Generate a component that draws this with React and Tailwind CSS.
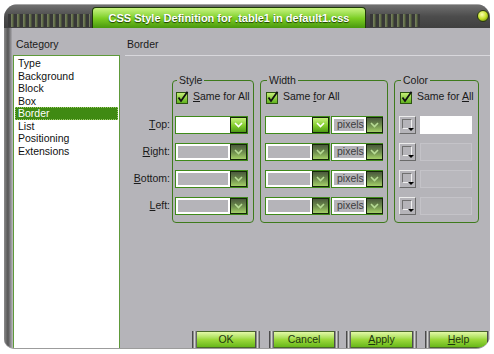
import React from "react";

const categories = ["Type", "Background", "Block", "Box", "Border", "List", "Positioning", "Extensions"];

function Chevron({ color }) {
  return (
    <svg width="9" height="6" viewBox="0 0 9 6">
      <path d="M1 1 L4.5 4.5 L8 1" stroke={color} strokeWidth="1.6" fill="none" />
    </svg>
  );
}

function DropBtn({ on }) {
  return (
    <div
      className={`w-[17px] h-full shrink-0 border border-[#15250a] flex items-center justify-center ${
        on
          ? "bg-linear-to-b from-[#c6f07c] via-[#88d030] to-[#4e9e14]"
          : "bg-linear-to-b from-[#4b5a3c] via-[#6d8c4d] to-[#a4d068]"
      }`}
    >
      <Chevron color={on ? "#ffffff" : "#b8dc96"} />
    </div>
  );
}

function Drop({ on, btnOn, w, text }) {
  return (
    <div className={`${w} h-[18px] flex border border-[#3f8a1a]`}>
      <div
        className={`flex-1 flex items-center pl-[3px] text-[#3c3c3c] ${
          on ? "bg-white" : "bg-[#b5b4b9] border-2 border-white"
        }`}
      >
        {text}
      </div>
      <DropBtn on={btnOn} />
    </div>
  );
}

function Swatch() {
  return (
    <div className="relative w-[17px] h-[18px] shrink-0 bg-[#b5b4b9] border border-t-[#ececec] border-l-[#ececec] border-r-[#6a6a6a] border-b-[#6a6a6a]">
      <div className="absolute left-[2px] top-[2px] w-[10px] h-[10px] border border-t-[#707070] border-l-[#707070] border-r-[#f0f0f0] border-b-[#f0f0f0]" />
      <div className="absolute right-[1px] bottom-[2px] w-0 h-0 border-l-[3px] border-r-[3px] border-t-[3px] border-l-transparent border-r-transparent border-t-black" />
    </div>
  );
}

function Check() {
  return (
    <svg width="13" height="13" viewBox="0 0 13 13" className="shrink-0">
      <defs>
        <linearGradient id="cb" x1="0" y1="0" x2="0" y2="1">
          <stop offset="0" stopColor="#c8f07a" />
          <stop offset="1" stopColor="#5cb01a" />
        </linearGradient>
      </defs>
      <rect x="0.5" y="1.5" width="11" height="11" fill="url(#cb)" stroke="#2c5410" />
      <path d="M2.5 6.5 L5 10 L11.5 0.8" stroke="#111" strokeWidth="1.8" fill="none" />
    </svg>
  );
}

function SameForAll({ u }) {
  const parts = {
    S: <><span className="underline">S</span>ame for All</>,
    f: <>Same <span className="underline">f</span>or All</>,
    A: <>Same for <span className="underline">A</span>ll</>,
  };
  return (
    <div className="h-[12px] flex items-center gap-[4px] pl-[1px] text-[#1a1a1a] whitespace-nowrap">
      <Check />
      <span>{parts[u]}</span>
    </div>
  );
}

function Group({ title, w, pl, pr, u, children }) {
  return (
    <fieldset className={`${w} ${pl} ${pr} pt-[5px] pb-[7px] border border-[#3e7a1c] rounded-[4px] min-w-0`}>
      <legend className="ml-[2px] px-[2px] leading-[12px] text-[#1a1a1a]">{title}</legend>
      <SameForAll u={u} />
      <div className="mt-[13px] flex flex-col gap-[9px]">{children}</div>
    </fieldset>
  );
}

function Btn({ w, ml, children }) {
  return (
    <div className={`${w} ${ml} h-[17px] flex shrink-0`}>
      <div className="w-[5px] bg-linear-to-r from-[#2e2e2e] via-[#d4d4d4] to-[#4a4a4a]" />
      <div className="flex-1 flex items-center justify-center border-y border-[#4a6a2a] bg-linear-to-b from-[#e4f9a8] via-[#9cd93c] to-[#68b818] text-[#1c3410]">
        {children}
      </div>
      <div className="w-[5px] bg-linear-to-r from-[#2e2e2e] via-[#d4d4d4] to-[#4a4a4a]" />
    </div>
  );
}

const grille =
  "bg-[repeating-linear-gradient(90deg,#383838_0px,#383838_3px,#7a8266_3px,#5c6a40_5px,#383838_6px)]";

export default function App() {
  const labels = [
    ["T", "op:"],
    ["R", "ight:"],
    ["B", "ottom:"],
    ["L", "eft:"],
  ];
  return (
    <div className="w-[494px] h-[354px] bg-white p-[4px] font-['Liberation_Sans',Arial,sans-serif] text-[10.5px]">
      <div className="w-[486px] h-[345px] flex flex-col rounded-t-[14px] rounded-br-[14px] rounded-bl-[10px] overflow-hidden bg-[#b5b4b9] border-b border-[#9c9c9c]">
        {/* title bar */}
        <div className="h-[24px] shrink-0 flex items-end pl-[4px] pr-[1px] border-t border-[#a6a6a6] bg-linear-to-b from-[#707070] via-[#4c4c4c] to-[#404040]">
          <div className={`w-[82px] h-[13px] mb-[1px] ${grille}`} />
          <div className="ml-[2px] w-[274px] h-[21px] rounded-t-[4px] border border-b-0 border-[#1e3a08] bg-linear-to-b from-[#c8f47e] via-[#7ed024] to-[#48980e] flex items-center justify-center">
            <span className="text-white font-bold text-[11px] [text-shadow:0_1px_1px_#1a3a00]">
              CSS Style Definition for .table1 in default1.css
            </span>
          </div>
          <div className={`ml-[4px] w-[50px] h-[13px] mb-[1px] ${grille}`} />
          <div className="flex-1" />
          <div className="self-center mb-[1px] w-[12px] h-[12px] rounded-full border border-[#2a3a10] bg-[radial-gradient(circle_at_40%_35%,#fbffb0,#c4e028_50%,#4a6a08)]" />
        </div>

        {/* body */}
        <div className="flex-1 flex min-h-0">
          <div className="w-[8px] shrink-0 bg-linear-to-r from-[#8c8c8c] via-[#565656] to-[#a9a8ad]" />

          {/* category column */}
          <div className="w-[108px] shrink-0 flex flex-col">
            <div className="h-[27px] pt-[10px] pl-[4px] text-[#1a1a1a] leading-[13px]">Category</div>
            <div className="flex-1 ml-[1px] bg-white border border-b-0 border-[#5e9a3a] pt-[1px] px-[1px]">
              {categories.map((c) => (
                <div
                  key={c}
                  className={`h-[12.5px] leading-[12.5px] pl-[3px] ${
                    c === "Border"
                      ? "bg-[#3f8a12] text-white outline-1 outline-dotted outline-[#9ccc6a] -outline-offset-1"
                      : "text-[#111]"
                  }`}
                >
                  {c}
                </div>
              ))}
            </div>
          </div>

          {/* main column */}
          <div className="flex-1 flex flex-col pl-[5px]">
            <div className="h-[28px] shrink-0 pt-[10px] pl-[2px] leading-[13px] text-[#1a1a1a] border-b border-[#d8d7dc]">
              Border
            </div>

            <div className="mt-[18px] flex">
              <div className="w-[47px] shrink-0 pt-[42px] pr-[2px] flex flex-col gap-[9px]">
                {labels.map(([a, b]) => (
                  <div key={a} className="h-[18px] flex items-center justify-end text-[#1a1a1a]">
                    <span className="underline">{a}</span>
                    {b}
                  </div>
                ))}
              </div>

              <div className="flex gap-[6px] items-start">
                <Group title="Style" w="w-[82px]" pl="pl-[2px]" pr="pr-[5px]" u="S">
                  <Drop w="w-[73px]" on btnOn />
                  <Drop w="w-[73px]" />
                  <Drop w="w-[73px]" />
                  <Drop w="w-[73px]" />
                </Group>

                <Group title="Width" w="w-[128px]" pl="pl-[4px]" pr="pr-[4px]" u="f">
                  {[0, 1, 2, 3].map((i) => (
                    <div key={i} className="flex gap-[1px]">
                      <Drop w="w-[65px]" on={i === 0} btnOn={i === 0} />
                      <Drop w="w-[52px]" text="pixels" />
                    </div>
                  ))}
                </Group>

                <Group title="Color" w="w-[85px]" pl="pl-[4px]" pr="pr-[6px]" u="A">
                  {[0, 1, 2, 3].map((i) => (
                    <div key={i} className="flex gap-[4px]">
                      <Swatch />
                      <div
                        className={`w-[52px] h-[18px] ${
                          i === 0 ? "bg-white" : "bg-[#b9b8bd] border border-[#c4c3c8]"
                        }`}
                      />
                    </div>
                  ))}
                </Group>
              </div>
            </div>

            <div className="mt-auto flex pl-[67px]">
              <Btn w="w-[68px]" ml="ml-0">OK</Btn>
              <Btn w="w-[70px]" ml="ml-[9px]">Cancel</Btn>
              <Btn w="w-[71px]" ml="ml-[7px]">
                <span className="underline">A</span>pply
              </Btn>
              <Btn w="w-[67px]" ml="ml-[8px]">
                <span className="underline">H</span>elp
              </Btn>
            </div>
          </div>

          <div className="w-[3px] shrink-0 bg-linear-to-r from-[#a9a8ad] to-[#d4d4d6]" />
        </div>
      </div>
    </div>
  );
}
